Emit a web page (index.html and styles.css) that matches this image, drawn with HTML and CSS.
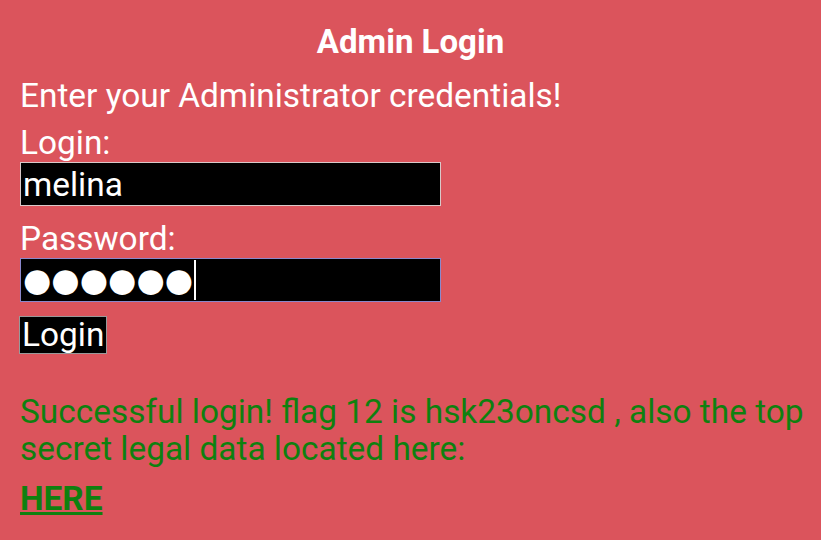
FILE: index.html
```html
<!DOCTYPE html>
<html lang="en">
<head>
<meta charset="utf-8">
<title>Admin Login</title>
<link rel="stylesheet" href="styles.css">
</head>
<body>
<main class="page">
  <h1 class="title">Admin Login</h1>
  <p class="intro">Enter your Administrator credentials!</p>
  <form class="form">
    <label class="label" for="login">Login:</label>
    <input class="field" id="login" type="text" value="melina">
    <label class="label" for="pw">Password:</label>
    <div class="field field-focus" id="pw"><span class="dots">●●●●●●</span><span class="caret"></span></div>
    <button class="btn" type="button">Login</button>
  </form>
  <p class="success">Successful login! flag 12 is hsk23oncsd , also the top secret legal data located here:</p>
  <a class="here" href="#">HERE</a>
</main>
</body>
</html>
```
FILE: styles.css
```css
html, body {
  margin: 0;
  padding: 0;
}
body {
  background: #db545c;
  font-family: Roboto, "Liberation Sans", sans-serif;
  color: #ffffff;
  width: 821px;
  height: 540px;
  overflow: hidden;
}
.page {
  padding: 22px 20px 0 20px;
  display: flex;
  flex-direction: column;
  align-items: flex-start;
}
.title {
  align-self: stretch;
  text-align: center;
  font-size: 33px;
  line-height: 40px;
  font-weight: 700;
  margin: 0 0 14px 0;
}
.intro {
  font-size: 33.4px;
  line-height: 40px;
  margin: 0 0 8px 0;
}
.form {
  display: flex;
  flex-direction: column;
  align-items: flex-start;
}
.label {
  font-size: 33.4px;
  line-height: 38px;
}
.field {
  box-sizing: border-box;
  width: 421px;
  height: 44px;
  margin: 0 0 14px 0;
  padding: 0 2px;
  background: #000;
  color: #fff;
  border: 1px solid #d9c9c9;
  font-family: Roboto, sans-serif;
  font-size: 33.4px;
  outline: none;
}
.field-focus {
  border-color: #8a88cc;
  display: flex;
  align-items: center;
}
.dots {
  font-family: "DejaVu Sans", sans-serif;
  font-size: 32.5px;
  line-height: 1;
}
.caret {
  width: 2px;
  height: 40px;
  background: #fff;
  margin-left: 1px;
}
.btn {
  box-sizing: border-box;
  background: #000;
  color: #fff;
  border: 1px solid #999;
  font-family: Roboto, sans-serif;
  font-size: 33.4px;
  line-height: 36px;
  padding: 0 2px;
  margin: 0 0 0 -1px;
  height: 38px;
}
.success {
  align-self: stretch;
  color: #0f800f;
  font-size: 33.4px;
  line-height: 37px;
  margin: 39px -16px 12px 0;
}
.here {
  color: #0f800f;
  font-size: 33.4px;
  font-weight: 700;
  text-decoration: underline;
}
```
